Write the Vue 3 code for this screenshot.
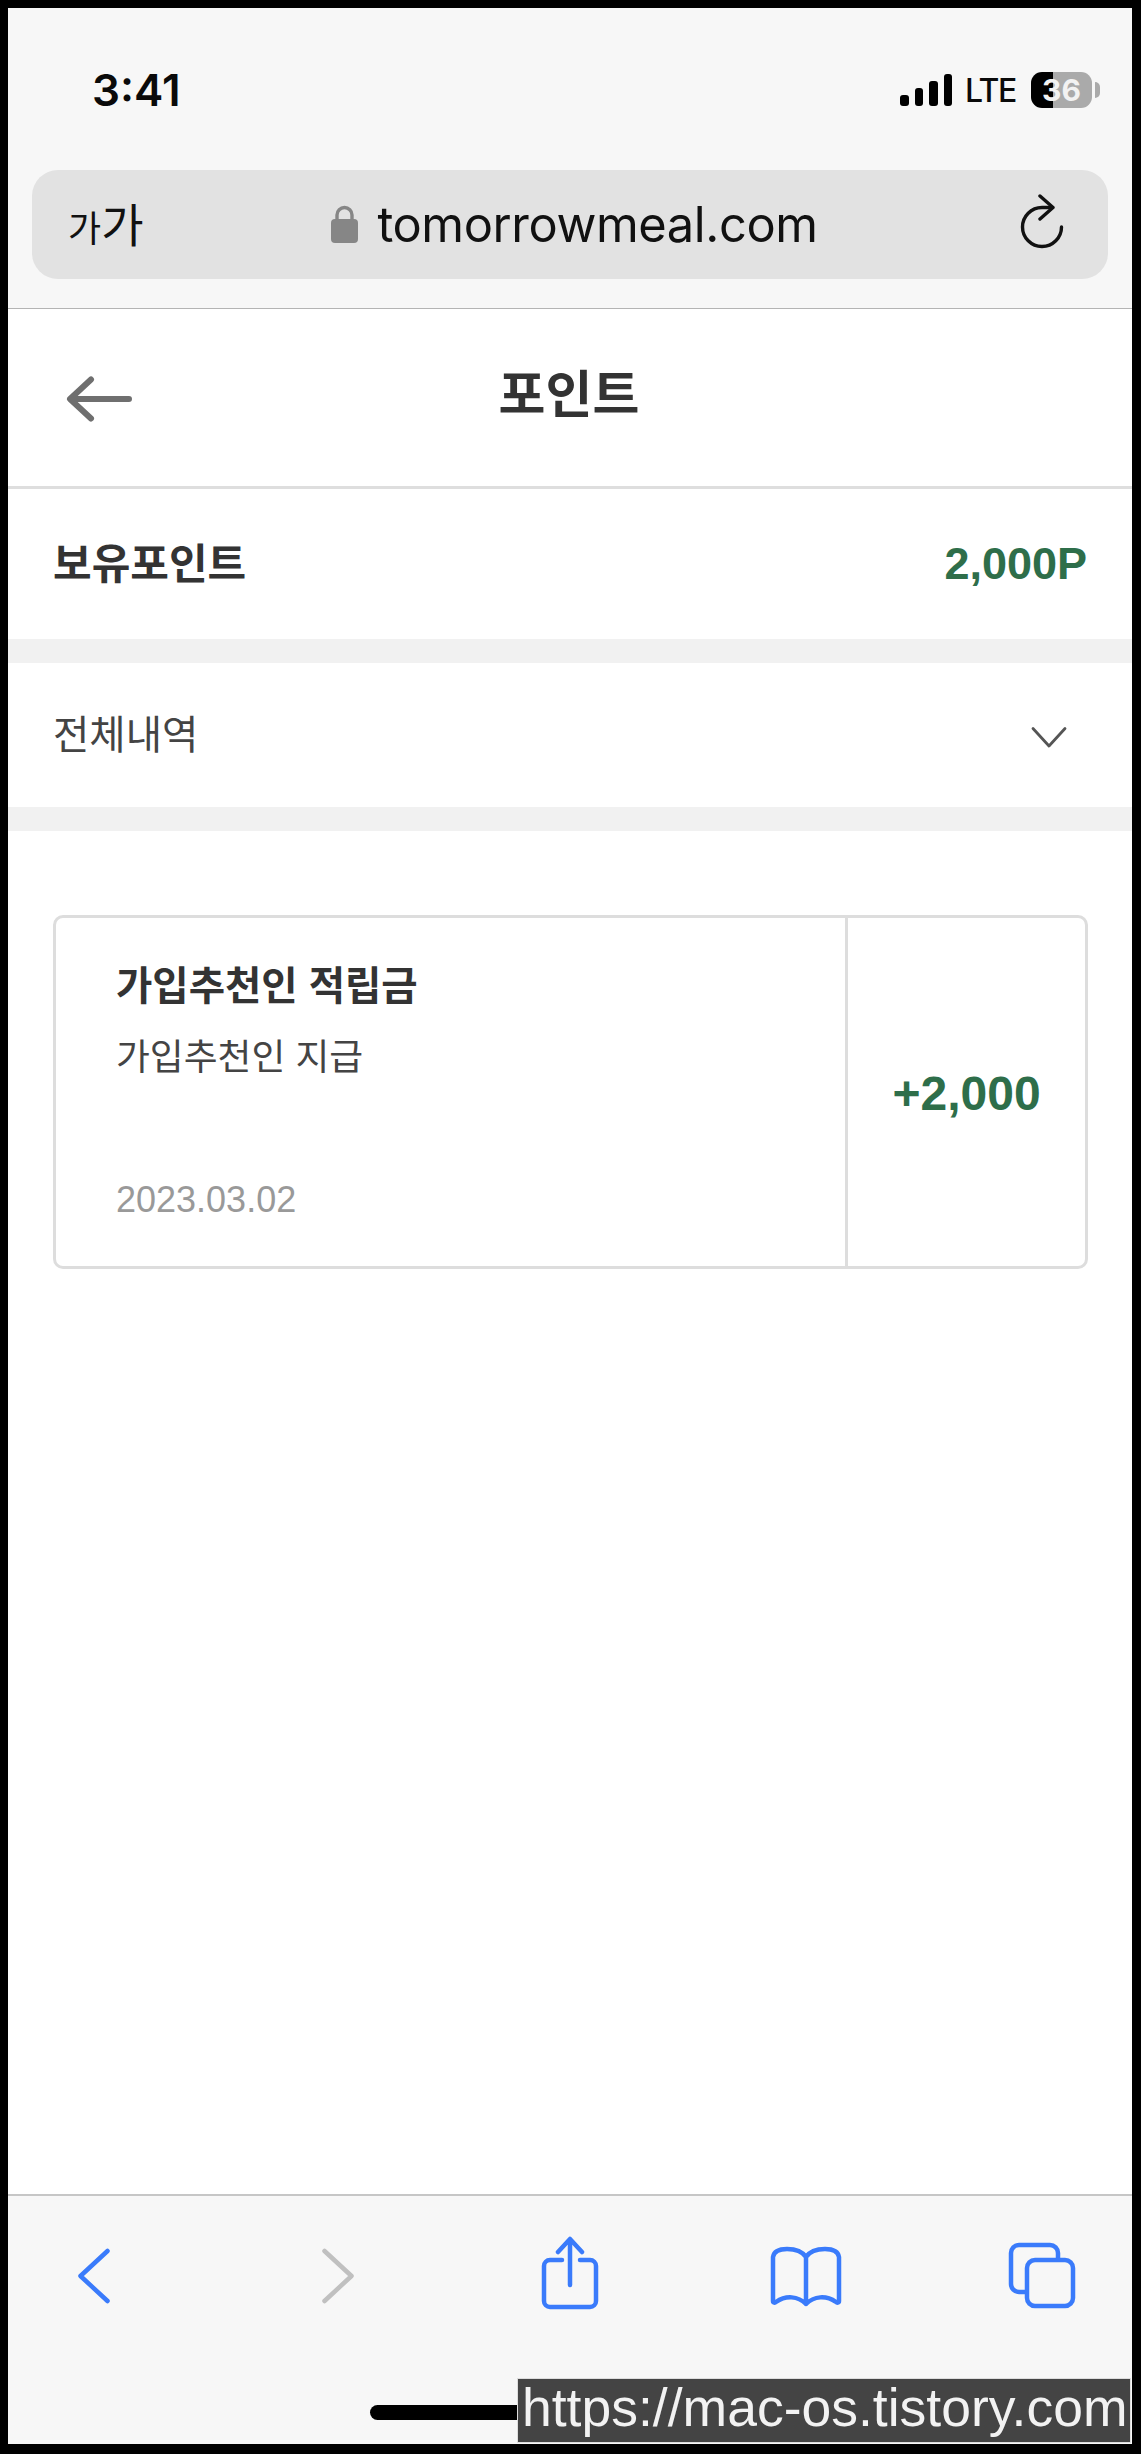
<template>
  <div class="frame">
    <div class="phone">
      <!-- browser top -->
      <header class="browser-top">
        <div class="status-bar">
          <span class="time">3:41</span>
          <div class="status-right">
            <div class="signal">
              <i class="bar b1"></i>
              <i class="bar b2"></i>
              <i class="bar b3"></i>
              <i class="bar b4"></i>
            </div>
            <span class="lte">LTE</span>
            <div class="battery"><span>36</span></div>
            <i class="battery-tip"></i>
          </div>
        </div>
        <div class="url-bar">
          <div class="text-size"><span class="small">가</span><span class="big">가</span></div>
          <div class="url">
            <svg class="lock" width="27" height="39" viewBox="0 0 27 39">
              <path d="M6 17V11a7.5 7.5 0 0 1 15 0v6" fill="none" stroke="#868686" stroke-width="3.4" />
              <rect x="0" y="15" width="27" height="24" rx="4" fill="#868686" />
            </svg>
            <span>tomorrowmeal.com</span>
          </div>
          <svg class="reload" width="46" height="56" viewBox="0 0 46 56">
            <path d="M42.5 33a19.5 19.5 0 1 1-19.5-19.5h10" fill="none" stroke="#111" stroke-width="3.4" stroke-linecap="round" />
            <path d="M21 2l13 11.500-13 11.500" fill="none" stroke="#111" stroke-width="3.4" stroke-linecap="round" stroke-linejoin="round" />
          </svg>
        </div>
      </header>

      <!-- page -->
      <main class="page">
        <div class="page-head">
          <svg class="back" width="66" height="46" viewBox="0 0 66 46">
            <path d="M63 23H6M25 3.500L4 23l21 19.500" fill="none" stroke="#6f6f6f" stroke-width="6" stroke-linecap="round" stroke-linejoin="round" />
          </svg>
          <h1>포인트</h1>
          <div></div>
        </div>

        <div class="row holding">
          <span class="label">보유포인트</span>
          <span class="amount">{{ points }}P</span>
        </div>
        <div class="row filter">
          <span class="filter-label">전체내역</span>
          <svg class="chevron" width="36" height="23" viewBox="0 0 36 23">
            <path d="M2 2.500L18 20 34 2.500" fill="none" stroke="#555" stroke-width="2.800" stroke-linecap="round" stroke-linejoin="round" />
          </svg>
        </div>

        <div class="card" v-for="item in history" :key="item.title">
          <div class="card-main">
            <div class="card-title">{{ item.title }}</div>
            <div class="card-desc">{{ item.desc }}</div>
            <div class="card-date">{{ item.date }}</div>
          </div>
          <div class="card-amount">{{ item.amount }}</div>
        </div>
      </main>

      <!-- browser bottom -->
      <footer class="toolbar">
        <svg width="80" height="80" viewBox="0 0 80 80">
          <path class="blue" d="M53.500 15L26.500 40l27 25" />
        </svg>
        <svg width="80" height="80" viewBox="0 0 80 80">
          <path class="gray" d="M26.500 15l27 25-27 25" />
        </svg>
        <svg width="80" height="80" viewBox="0 0 80 80">
          <path class="blue" d="M32 24H20a6 6 0 0 0-6 6v35a6 6 0 0 0 6 6h40a6 6 0 0 0 6-6V30a6 6 0 0 0-6-6H50" />
          <path class="blue" d="M40 49V4M28 16L40 3l12 13" />
        </svg>
        <svg width="80" height="80" viewBox="0 0 80 80">
          <path class="blue" d="M40 21V68M40 21C36 15 28 13 21 13 14 13 8 15 7 21V65c0 2 2 2 3 1 10-7 22-6 30 2 8-8 20-9 30-2 1 1 3 1 3-1V21C72 15 66 13 59 13 52 13 44 15 40 21Z" />
        </svg>
        <svg width="80" height="80" viewBox="0 0 80 80">
          <path class="blue" d="M56 22V17a8 8 0 0 0-8-8H17a8 8 0 0 0-8 8v31a8 8 0 0 0 8 8h7" />
          <rect class="blue" x="25" y="24" width="46" height="46" rx="8" />
        </svg>
        <i class="home-indicator"></i>
      </footer>
    </div>
    <div class="watermark">https://mac-os.tistory.com</div>
  </div>
</template>

<script setup>
const points = "2,000"

const history = [
  {
    title: "가입추천인 적립금",
    desc: "가입추천인 지급",
    date: "2023.03.02",
    amount: "+2,000",
  },
]
</script>

<style>
html,
body {
  margin: 0;
  background: #000;
}
</style>

<style scoped>
.frame {
  position: relative;
  width: 1141px;
  height: 2454px;
  background: #000;
  padding: 8px 9px 10px 8px;
  box-sizing: border-box;
}

.phone {
  height: 100%;
  display: flex;
  flex-direction: column;
  background: #fff;
  font-family: "Liberation Sans", "Noto Sans CJK KR", sans-serif;
}

.browser-top {
  height: 300px;
  flex-shrink: 0;
  background: #f7f7f7;
  border-bottom: 1px solid #b4b4b4;
}

.status-bar {
  height: 160px;
  padding: 2px 32px 0 84px;
  display: flex;
  align-items: center;
  justify-content: space-between;
  font-family: Inter, sans-serif;
}

.time {
  font-size: 44px;
  font-weight: 600;
  color: #0a0a0a;
}

.status-right {
  display: flex;
  align-items: center;
}

.signal {
  display: flex;
  align-items: flex-end;
  gap: 6px;
  height: 32px;
}

.bar {
  width: 8.500px;
  background: #000;
  border-radius: 3px;
}

.b1 { height: 11px; }
.b2 { height: 18px; }
.b3 { height: 25px; }
.b4 { height: 32px; }

.lte {
  margin-left: 13px;
  width: 51px;
  font-size: 32px;
  font-weight: 500;
  letter-spacing: -1.500px;
  color: #0a0a0a;
  white-space: nowrap;
}

.battery {
  margin-left: 15px;
  width: 61px;
  height: 36px;
  border-radius: 11px;
  background: linear-gradient(90deg, #000 22px, #aaa 22px);
  display: flex;
  align-items: center;
  justify-content: center;
  color: #f2f2f2;
  font-size: 30px;
  font-weight: 700;
}

.battery-tip {
  margin-left: 3px;
  width: 5px;
  height: 16px;
  background: #aaa;
  border-radius: 0 5px 5px 0;
}

.url-bar {
  margin: 0 24px;
  height: 109px;
  padding: 0 43px 0 36px;
  border-radius: 26px;
  background: #e2e2e2;
  display: grid;
  grid-template-columns: 1fr auto 1fr;
  align-items: center;
}

.text-size {
  color: #111;
  font-family: "Noto Sans CJK KR", sans-serif;
  line-height: 1;
  margin-top: -5px;
}

.small { font-size: 36px; }
.big { font-size: 46px; }

.url {
  display: flex;
  align-items: center;
  gap: 19px;
  font-family: Inter, sans-serif;
  font-size: 48.800px;
  letter-spacing: -0.4px;
  color: #111;
  margin-left: 16px;
}

.lock {
  margin-top: -2px;
}

.reload {
  justify-self: end;
  margin-top: -6px;
}

.page {
  flex: 1;
}

.page-head {
  height: 177px;
  padding-left: 58px;
  padding-right: 60px;
  border-bottom: 3px solid #dedede;
  display: grid;
  grid-template-columns: 1fr auto 1fr;
  align-items: center;
}

.back {
  margin-top: 2px;
}

h1 {
  margin: -14px 0 0;
  font-size: 51px;
  font-weight: 700;
  color: #333;
}

.row {
  display: flex;
  align-items: center;
  justify-content: space-between;
  padding: 0 46px;
  border-bottom: 24px solid #f1f1f1;
}

.holding {
  height: 150px;
  padding-right: 45px;
}

.label {
  margin-left: -1px;
  margin-top: -7px;
  font-size: 42px;
  font-weight: 700;
  color: #333;
}

.amount {
  font-size: 45px;
  font-weight: 700;
  color: #2e6e4a;
}

.filter {
  height: 144px;
  font-size: 39.500px;
  color: #444;
  padding-right: 65px;
}

.filter-label {
  margin-left: -1px;
  margin-top: -7px;
}

.chevron {
  margin-top: 5px;
}

.card {
  margin: 84px 44px 0 45px;
  height: 354px;
  box-sizing: border-box;
  border: 3px solid #ddd;
  border-radius: 10px;
  display: flex;
}

.card-main {
  flex: 1;
  padding: 43px 0 0 60px;
  display: flex;
  flex-direction: column;
}

.card-title {
  font-size: 39.500px;
  font-weight: 700;
  color: #333;
  line-height: 50px;
}

.card-desc {
  margin-top: 24px;
  font-size: 36.800px;
  color: #444;
  line-height: 46px;
}

.card-date {
  margin-top: 98px;
  font-size: 36px;
  color: #999;
  line-height: 42px;
}

.card-amount {
  width: 237px;
  padding-top: 3px;
  border-left: 3px solid #ddd;
  display: flex;
  align-items: center;
  justify-content: center;
  font-size: 48px;
  font-weight: 700;
  color: #2e6e4a;
}

.toolbar {
  position: relative;
  height: 250px;
  flex-shrink: 0;
  box-sizing: border-box;
  background: #f7f7f7;
  border-top: 2px solid #c6c6c6;
  display: flex;
  align-items: flex-start;
  padding: 40px 0 0 46px;
  gap: 152px;
}

.toolbar svg:nth-child(2) { margin-left: 12px; }
.toolbar svg:nth-child(4),
.toolbar svg:nth-child(5) { margin-left: 4px; }

.blue,
.gray {
  fill: none;
  stroke-width: 4.500;
  stroke-linecap: round;
  stroke-linejoin: round;
}

.blue { stroke: #3a7bfb; }
.gray { stroke: #c0c0c0; }

.home-indicator {
  position: absolute;
  left: 362px;
  bottom: 24px;
  width: 400px;
  height: 15px;
  background: #000;
  border-radius: 8px;
}

.watermark {
  position: absolute;
  left: 518px;
  top: 2379px;
  width: 612px;
  height: 63px;
  box-sizing: border-box;
  padding-left: 4px;
  background: #444;
  color: #f2f2f2;
  font-family: "Liberation Sans", sans-serif;
  font-size: 53.500px;
  line-height: 58px;
  white-space: nowrap;
  box-shadow: 0 0 0 1px #ddd;
}
</style>
